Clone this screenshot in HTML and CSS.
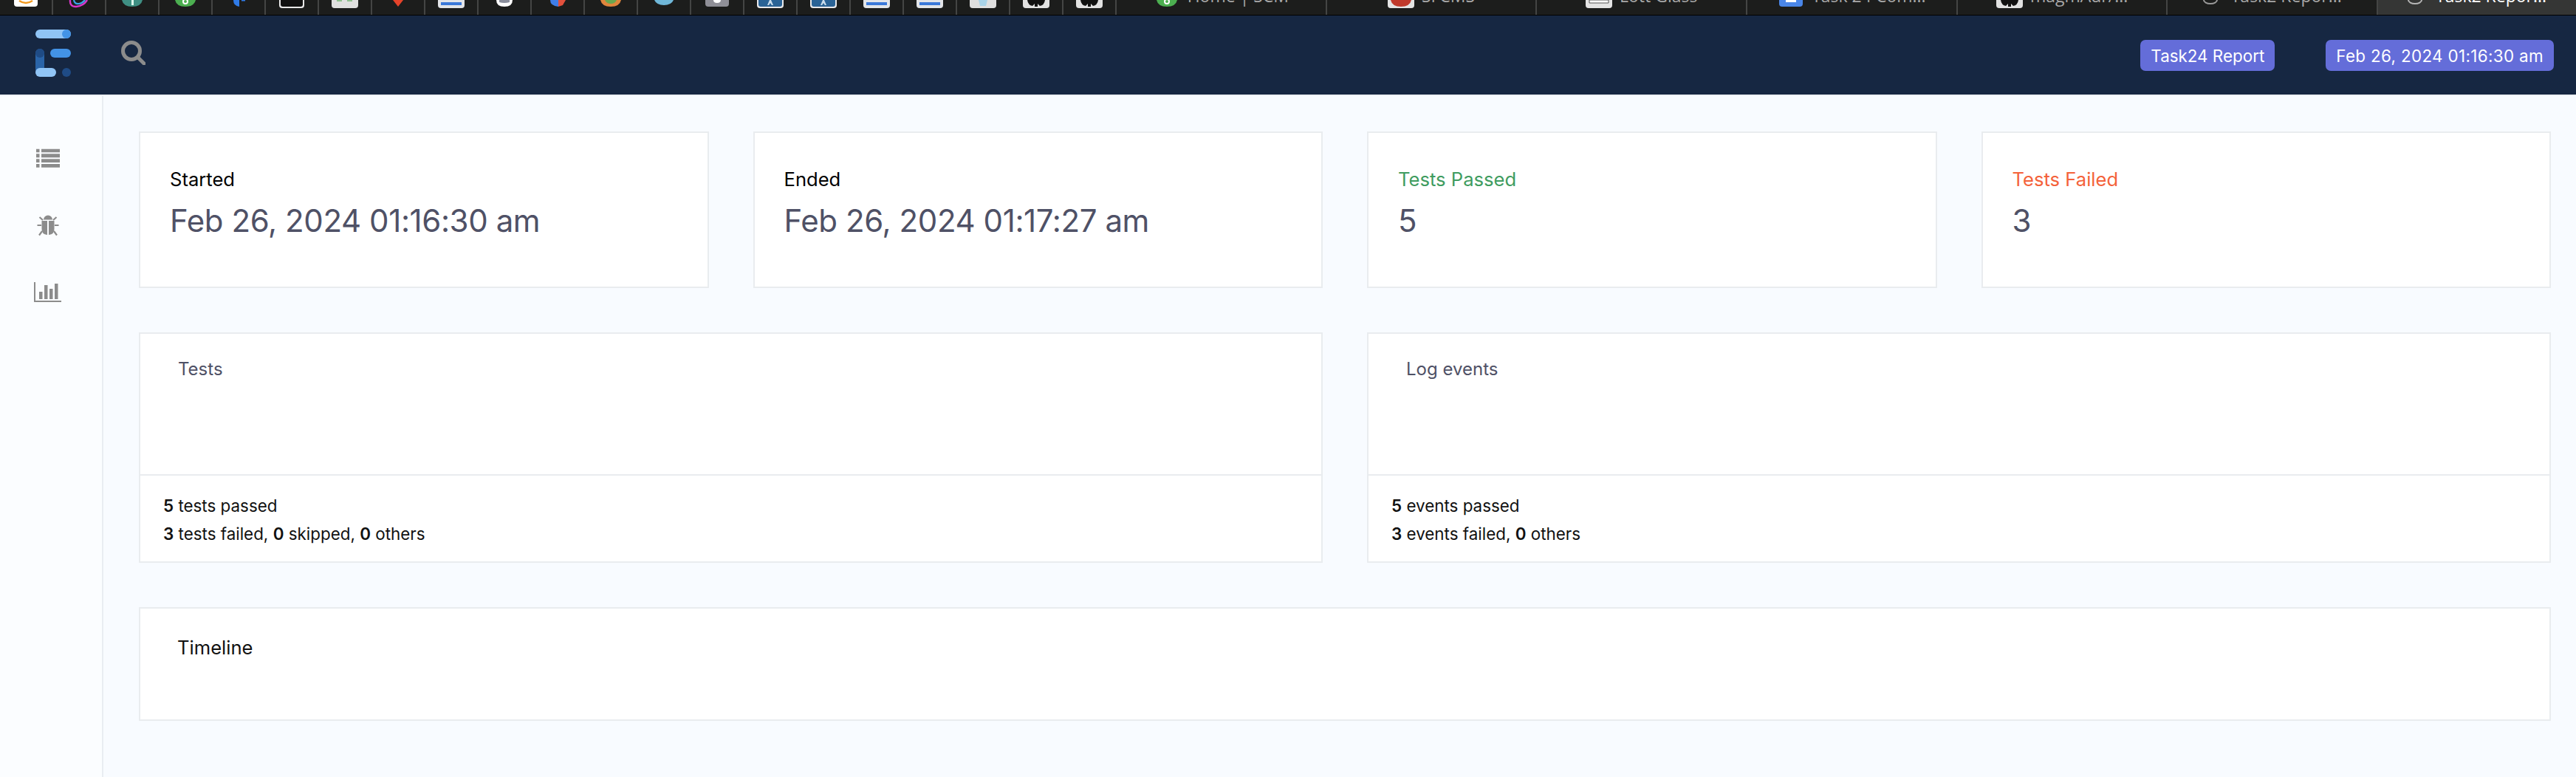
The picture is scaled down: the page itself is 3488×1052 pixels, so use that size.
FILE: index.html
```html
<!DOCTYPE html>
<html lang="en">
<head>
<meta charset="utf-8">
<title>Task24 Report</title>
<link rel="stylesheet" href="styles.css">
</head>
<body>
<div class="tabbar">
  <div class="tab"><svg class="fav" viewBox="0 0 36 12"><path d="M2 0h32v5a4 4 0 0 1-4 4H6a4 4 0 0 1-4-4z" fill="#fff"/><path d="M9 1q9 6 18 0" fill="none" stroke="#f39a1f" stroke-width="2.4"/></svg></div>
  <div class="tab"><svg class="fav" viewBox="0 0 36 12"><path d="M6 0q-1 9 8 9 10-1 15-9" fill="none" stroke="#d936c8" stroke-width="2.4"/><path d="M11 0q1 6 7 5 5-1 8-5" fill="none" stroke="#3aa5e8" stroke-width="2.2"/></svg></div>
  <div class="tab"><svg class="fav" viewBox="0 0 36 12"><path d="M4 0h28q-2 9-14 9T4 0z" fill="#3f8f83"/><path d="M17 0h3v7h-3z" fill="#dfe" /></svg></div>
  <div class="tab"><svg class="fav" viewBox="0 0 36 12"><path d="M4 0h28q-2 9-14 9T4 0z" fill="#4caf50"/><circle cx="18" cy="2" r="3" fill="none" stroke="#fff" stroke-width="2"/></svg></div>
  <div class="tab"><svg class="fav" viewBox="0 0 36 12"><path d="M11 0h8v9q-8-1-8-9z" fill="#2f7be8"/><path d="M22 0h5v1.500h-5z" fill="#2f7be8"/></svg></div>
  <div class="tab"><svg class="fav" viewBox="0 0 36 12"><path d="M1 0h34v7a4 4 0 0 1-4 4H5a4 4 0 0 1-4-4z" fill="#e8e8e8"/><path d="M3 0h30v6a3 3 0 0 1-3 3H6a3 3 0 0 1-3-3z" fill="#111"/></svg></div>
  <div class="tab"><svg class="fav" viewBox="0 0 36 12"><path d="M0 0h36v7a4 4 0 0 1-4 4H4a4 4 0 0 1-4-4z" fill="#e0e0e0"/><path d="M7 0h7v2H7zM21 0h7v2h-7z" fill="#8fc08f"/></svg></div>
  <div class="tab"><svg class="fav" viewBox="0 0 36 12"><path d="M11 0h14l-7 9z" fill="#e5432a"/></svg></div>
  <div class="tab"><svg class="fav" viewBox="0 0 36 12"><path d="M0 0h36v7a4 4 0 0 1-4 4H4a4 4 0 0 1-4-4z" fill="#e2e4e8"/><path d="M4 3h28v4H4z" fill="#3a78d8"/></svg></div>
  <div class="tab"><svg class="fav" viewBox="0 0 36 12"><path d="M7 0h22q0 9-11 9T7 0z" fill="#fff"/><path d="M11 0h14v3q-7 2-14 0z" fill="#8a8e9c"/></svg></div>
  <div class="tab"><svg class="fav" viewBox="0 0 36 12"><path d="M8 0h11v9q-11-1-11-9z" fill="#3f7ee8"/><path d="M19 0h10l-4 7-6 2z" fill="#e2503c"/></svg></div>
  <div class="tab"><svg class="fav" viewBox="0 0 36 12"><path d="M4 0h28q-2 9-14 9T4 0z" fill="#e0863c"/><path d="M10 0h16q-2 5-8 5t-8-5z" fill="#6aa84f"/></svg></div>
  <div class="tab"><svg class="fav" viewBox="0 0 36 12"><path d="M5 0h26q-3 7-13 7T5 0z" fill="#6fb7d8"/></svg></div>
  <div class="tab"><svg class="fav" viewBox="0 0 36 12"><path d="M2 0h32v5a4 4 0 0 1-4 4H6a4 4 0 0 1-4-4z" fill="#8f8f97"/><path d="M13 0h10q0 4-5 4t-5-4z" fill="#fff"/></svg></div>
  <div class="tab"><svg class="fav" viewBox="0 0 36 12"><path d="M0 0h36v7a4 4 0 0 1-4 4H4a4 4 0 0 1-4-4z" fill="#e8e8ea"/><path d="M2 0h32v6a3 3 0 0 1-3 3H5a3 3 0 0 1-3-3z" fill="#2a6396"/><path d="M17 0h2l3 7h-2l-2-3-2 3h-2z" fill="#c9dcec"/></svg></div>
  <div class="tab"><svg class="fav" viewBox="0 0 36 12"><path d="M0 0h36v7a4 4 0 0 1-4 4H4a4 4 0 0 1-4-4z" fill="#e8e8ea"/><path d="M2 0h32v6a3 3 0 0 1-3 3H5a3 3 0 0 1-3-3z" fill="#2a6396"/><path d="M17 0h2l3 7h-2l-2-3-2 3h-2z" fill="#c9dcec"/></svg></div>
  <div class="tab"><svg class="fav" viewBox="0 0 36 12"><path d="M0 0h36v7a4 4 0 0 1-4 4H4a4 4 0 0 1-4-4z" fill="#e2e4e8"/><path d="M4 3h28v4H4z" fill="#3a78d8"/></svg></div>
  <div class="tab"><svg class="fav" viewBox="0 0 36 12"><path d="M0 0h36v7a4 4 0 0 1-4 4H4a4 4 0 0 1-4-4z" fill="#e2e4e8"/><path d="M4 3h28v4H4z" fill="#3a78d8"/></svg></div>
  <div class="tab"><svg class="fav" viewBox="0 0 36 12"><path d="M0 0h36v7a4 4 0 0 1-4 4H4a4 4 0 0 1-4-4z" fill="#dfdfdf"/><path d="M12 0h12l-2 8h-8z" fill="#a9d3e8"/></svg></div>
  <div class="tab"><svg class="fav" viewBox="0 0 36 12"><path d="M0 0h36v7a4 4 0 0 1-4 4H4a4 4 0 0 1-4-4z" fill="#e2e2e2"/><path d="M6 0h24q-1 7-7 8l-3-3v4h-4V5l-3 3Q7 7 6 0z" fill="#111"/></svg></div>
  <div class="tab"><svg class="fav" viewBox="0 0 36 12"><path d="M0 0h36v7a4 4 0 0 1-4 4H4a4 4 0 0 1-4-4z" fill="#e2e2e2"/><path d="M6 0h24q-1 7-7 8l-3-3v4h-4V5l-3 3Q7 7 6 0z" fill="#111"/></svg></div>
  <div class="tab tab-wide"><svg class="fav" viewBox="0 0 36 12"><path d="M4 0h28q-2 9-14 9T4 0z" fill="#4caf50"/><circle cx="18" cy="2" r="3" fill="none" stroke="#fff" stroke-width="2"/></svg><span class="tab-text">Home | SCM</span></div>
  <div class="tab tab-wide"><svg class="fav" viewBox="0 0 36 12"><path d="M0 0h36v7a4 4 0 0 1-4 4H4a4 4 0 0 1-4-4z" fill="#e4e4e4"/><path d="M4 0h28q-2 9-14 9T4 0z" fill="#c0392b"/></svg><span class="tab-text">SFCMS</span></div>
  <div class="tab tab-wide"><svg class="fav" viewBox="0 0 36 12"><path d="M0 0h36v7a4 4 0 0 1-4 4H4a4 4 0 0 1-4-4z" fill="#e4e4e4"/><path d="M5 0h26v4H5z" fill="#fff" stroke="#555" stroke-width="1"/></svg><span class="tab-text">Lott Glass</span></div>
  <div class="tab tab-wide"><svg class="fav" viewBox="0 0 36 12"><path d="M2 0h32v5a4 4 0 0 1-4 4H6a4 4 0 0 1-4-4z" fill="#4a86e8"/><path d="M11 0h14v3H11z" fill="#fff"/></svg><span class="tab-text">Task 24 Com...</span></div>
  <div class="tab tab-wide"><svg class="fav" viewBox="0 0 36 12"><path d="M0 0h36v7a4 4 0 0 1-4 4H4a4 4 0 0 1-4-4z" fill="#e2e2e2"/><path d="M6 0h24q-1 7-7 8l-3-3v4h-4V5l-3 3Q7 7 6 0z" fill="#111"/></svg><span class="tab-text">magmAdr/...</span></div>
  <div class="tab tab-wide"><svg class="ring" viewBox="0 0 20 12"><path d="M1 0a9 5 0 0 0 18 0" fill="none" stroke="#9a9a9a" stroke-width="2"/></svg><span class="tab-text">Task2 Repor...</span></div>
  <div class="tab tab-wide tab-active"><svg class="ring" viewBox="0 0 20 12"><path d="M1 0a9 5 0 0 0 18 0" fill="none" stroke="#b5b5b5" stroke-width="2"/></svg><span class="tab-text">Task2 Repor...</span></div>
</div>

<header class="nav">
  <svg class="logo" viewBox="0 0 48 64">
    <rect x="0" y="0" width="48" height="12" rx="6" fill="#90c4f5"/>
    <circle cx="42" cy="6" r="6" fill="#4393e6"/>
    <rect x="20" y="26" width="28" height="12" rx="6" fill="#4393e6"/>
    <rect x="0" y="26" width="12" height="34" rx="6" fill="#2a64a8"/>
    <circle cx="6" cy="32" r="6" fill="#1f4b85"/>
    <rect x="0" y="52" width="28" height="12" rx="6" fill="#90c4f5"/>
    <circle cx="42" cy="58" r="6" fill="#1f4b85"/>
  </svg>
  <svg class="search" viewBox="0 0 33 33">
    <circle cx="14" cy="14" r="11.500" fill="none" stroke="#8c8c8c" stroke-width="5"/>
    <path d="M23 23l8 8" stroke="#8c8c8c" stroke-width="5" stroke-linecap="round"/>
  </svg>
  <div class="nav-badges">
    <span class="badge">Task24 Report</span>
    <span class="badge badge-date">Feb 26, 2024 01:16:30 am</span>
  </div>
</header>

<div class="layout">
  <aside class="side">
    <div class="side-item"><svg class="side-icon" viewBox="0 0 40 30" fill="#8c8c8c"><path d="M4 2.700h4.500v4.600H4zM11 2.700h25v4.600H11zM4 9.300h4.500v5H4zM11 9.300h25v5H11zM4 16.300h4.500V21H4zM11 16.300h25V21H11zM4 23h4.500v4.700H4zM11 23h25v4.700H11z"/></svg></div>
    <div class="side-item"><svg class="side-icon" viewBox="0 0 40 30" fill="#8c8c8c"><path d="M14 7.500a6 6 0 0 1 12 0zM11.500 9H19v19q-7.500-.5-7.500-8zM21 9h7.500v11q0 7.500-7.500 8z"/><path d="M13 8L8.500 4M27 8l4.500-4M11 15H5.500M29 15h5.500M12 23l-4 5.500M28 23l4 5.500" stroke="#8c8c8c" stroke-width="2.200" fill="none"/></svg></div>
    <div class="side-item"><svg class="side-icon" viewBox="0 0 40 30" fill="#8c8c8c"><path d="M1 1h2v25h35v2H1zM8 14h4.500v10H8zM15 5h4.500v19H15zM22 10h4.500v14H22zM29 3h4.500v21H29z"/></svg></div>
  </aside>
  <main class="main">
    <section class="stats">
      <div class="card stat"><div class="label">Started</div><div class="value">Feb 26, 2024 01:16:30 am</div></div>
      <div class="card stat"><div class="label">Ended</div><div class="value">Feb 26, 2024 01:17:27 am</div></div>
      <div class="card stat"><div class="label label-pass">Tests Passed</div><div class="value">5</div></div>
      <div class="card stat"><div class="label label-fail">Tests Failed</div><div class="value">3</div></div>
    </section>
    <section class="charts">
      <div class="card chart">
        <div class="chart-head"><div class="chart-title">Tests</div></div>
        <div class="chart-foot">
          <div><b>5</b> tests passed</div>
          <div><b>3</b> tests failed, <b>0</b> skipped, <b>0</b> others</div>
        </div>
      </div>
      <div class="card chart">
        <div class="chart-head"><div class="chart-title">Log events</div></div>
        <div class="chart-foot">
          <div><b>5</b> events passed</div>
          <div><b>3</b> events failed, <b>0</b> others</div>
        </div>
      </div>
    </section>
    <section class="card timeline"><div class="timeline-title">Timeline</div></section>
  </main>
</div>
</body>
</html>
```

FILE: styles.css
```css
* { box-sizing: border-box; }
html, body { margin: 0; padding: 0; }
body {
  height: 1052px;
  overflow: hidden;
  background: #f8fbff;
  font-family: Inter, "Liberation Sans", sans-serif;
  display: flex;
  flex-direction: column;
}

/* browser tab strip */
.tabbar {
  height: 21px;
  flex: none;
  display: flex;
  background: #1c1d1c;
  border-bottom: 1px solid #000;
  overflow: hidden;
}
.tab {
  width: 72px;
  flex: none;
  height: 20px;
  display: flex;
  justify-content: center;
  align-items: flex-end;
  gap: 10px;
  border-right: 2px solid #444544;
  overflow: hidden;
}
.tab-wide { width: 284.7px; }
.tab-active { flex: 1; background: #353635; border-right: 0; }
.fav { width: 36px; height: 12px; margin-bottom: 8px; flex: none; }
.ring { width: 20px; height: 12px; margin-bottom: 8px; flex: none; margin-right: 8px; }
.tab-text {
  font-family: "Open Sans", sans-serif;
  font-size: 23px;
  line-height: 24px;
  margin-bottom: 14px;
  color: #a8a8a8;
  white-space: nowrap;
}
.tab-active .tab-text { color: #fff; }

/* app header */
.nav {
  height: 109px;
  flex: none;
  display: flex;
  align-items: flex-start;
  background: #162742;
  border-bottom: 2px solid #eef1f5;
  padding: 19px 30px 0 48px;
}
.logo { width: 48px; height: 64px; flex: none; }
.search { width: 33px; height: 33px; flex: none; margin: 15px 0 0 68px; }
.nav-badges { margin-left: auto; display: flex; gap: 69px; margin-top: 14px; }
.badge {
  height: 42px;
  padding: 0 14px;
  display: flex;
  align-items: center;
  background: #646dd9;
  border-radius: 7px;
  color: #fff;
  font-size: 22.4px;
  font-weight: 400;
  white-space: nowrap;
}
.badge-date { letter-spacing: .35px; }

/* layout */
.layout { flex: 1; display: flex; min-height: 0; }
.side {
  width: 140px;
  flex: none;
  background: #fbfdff;
  border-right: 2px solid #e9edf2;
  padding: 38px 9px 0 0;
  display: flex;
  flex-direction: column;
}
.side-item { height: 91px; display: flex; align-items: center; justify-content: center; }
.side-icon { width: 40px; height: 30px; }
.main {
  flex: 1;
  min-width: 0;
  padding: 48px 34px 0 48px;
  display: flex;
  flex-direction: column;
  gap: 60px;
}

/* cards */
.card { background: #fff; border: 2px solid #e9ecef; }
.stats { display: grid; grid-template-columns: repeat(4, 1fr); gap: 60px; }
.stat { height: 212px; padding: 44px 40px; }
.label { font-size: 25.6px; line-height: 38px; color: #000; }
.label-pass { color: #3f9c60; }
.label-fail { color: #f4623a; }
.value { font-size: 42px; line-height: 48px; letter-spacing: -.4px; color: #4f5166; margin-top: 13px; }
.charts { display: grid; grid-template-columns: repeat(2, 1fr); gap: 60px; }
.chart { height: 312px; display: flex; flex-direction: column; }
.chart-head { height: 192px; padding: 30px 51px; border-bottom: 2px solid #e9ecef; flex: none; }
.chart-title { font-size: 24px; line-height: 36px; color: #4f5166; }
.chart-foot { padding: 22px 31px; font-size: 22.4px; line-height: 38px; color: #111; }
.chart-foot b { font-weight: 600; }
.timeline { height: 154px; padding: 34px 50px; }
.timeline-title { font-size: 25.6px; line-height: 38px; color: #111; }
```
